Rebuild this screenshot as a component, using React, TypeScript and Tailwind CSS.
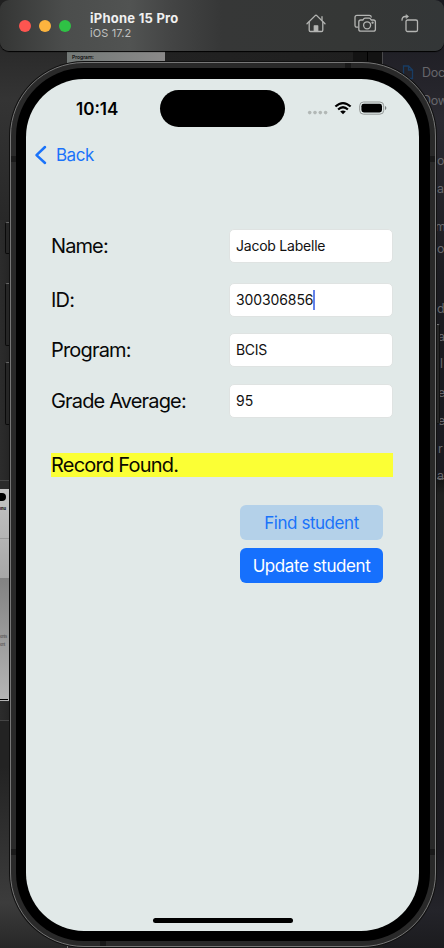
import React from "react";

const FONT = "font-['Inter','Roboto',sans-serif]";

function HomeIcon() {
  return (
    <svg width="20" height="19" viewBox="0 0 20 19" fill="none" stroke="#b4b5b3" strokeWidth="1.3" strokeLinecap="round" strokeLinejoin="round">
      <path d="M1 9.7 9.2 1.6q.8-.7 1.6 0L19 9.7" />
      <path d="M3.2 8v8.2q0 1.3 1.3 1.3h11q1.3 0 1.3-1.3V8M16 6.2V2.7" />
      <path d="M8.3 17v-5.2h3.4V17z" fill="#b4b5b3" />
    </svg>
  );
}

function CameraIcon() {
  return (
    <svg width="23" height="19" viewBox="0 0 23 19" fill="none" stroke="#b4b5b3" strokeWidth="1.3" strokeLinecap="round" strokeLinejoin="round">
      <path d="M3.8 13.2H3Q1 13.2 1 11.2V3.4Q1 1.4 3 1.4h12.3q1.9 0 1.9 1.6" />
      <path d="M6.8 6h2.1l1-1.3q.5-.6 1.2-.6h4q.7 0 1.2.6l1 1.3h2.1q2 0 2 2v7.2q0 2-2 2H6.8q-2 0-2-2V8q0-2 2-2Z" />
      <circle cx="13.1" cy="11.3" r="3.5" />
      <circle cx="18.6" cy="8.7" r=".5" fill="#b4b5b3" />
    </svg>
  );
}

function RotateIcon() {
  return (
    <svg width="18" height="19" viewBox="0 0 18 19" fill="none" stroke="#b4b5b3" strokeWidth="1.3" strokeLinecap="round" strokeLinejoin="round">
      <rect x="5" y="6" width="11.5" height="11.5" rx="1.6" />
      <path d="M1 6.2Q1 2.5 4.3 2.5h2" />
      <path d="M5.3.8 7.6 2.5 5.3 4.3Z" fill="#b4b5b3" strokeWidth=".6" />
    </svg>
  );
}

function StatusIcons() {
  return (
    <svg width="80" height="16" viewBox="0 0 80 16">
      <g fill="#b2b8b6">
        <circle cx="2.7" cy="12.6" r="1.8" />
        <circle cx="8" cy="12.6" r="1.8" />
        <circle cx="13.3" cy="12.6" r="1.8" />
        <circle cx="18.6" cy="12.6" r="1.8" />
      </g>
      <g fill="none" stroke="#000" strokeWidth="2.2">
        <path d="M28.4 6.5q7.6-6.9 15.2 0" />
        <path d="M31.1 9.5q4.9-4.5 9.8 0" />
      </g>
      <path d="M33.2 11.6q2.8-2.2 5.6 0l-2.8 2.7Z" />
      <rect x="52.7" y="2" width="24" height="12.2" rx="3.8" fill="none" stroke="#929796" strokeWidth="1" />
      <rect x="54.4" y="3.8" width="20.6" height="8.6" rx="2.4" />
      <path d="M78 6q1.4.5 1.4 2t-1.4 2Z" fill="#7b807f" />
    </svg>
  );
}

const SIDEBAR = [
  { text: "Doc", pos: "left-[422px] top-[64px]" },
  { text: "Dow", pos: "left-[422px] top-[92px]" },
  { text: "o", pos: "left-[437px] top-[152px]" },
  { text: "a", pos: "left-[437px] top-[180px]" },
  { text: "m", pos: "left-[435px] top-[218px]" },
  { text: "o", pos: "left-[437px] top-[240px]" },
  { text: "d", pos: "left-[437px] top-[300px]" },
  { text: "a", pos: "left-[438px] top-[328px]" },
  { text: "l", pos: "left-[440px] top-[355px]" },
  { text: "e", pos: "left-[438px] top-[384px]" },
  { text: "e", pos: "left-[438px] top-[412px]" },
  { text: "r", pos: "left-[438px] top-[440px]" },
  { text: "a", pos: "left-[437px] top-[467px]" },
];

function Desktop() {
  return (
    <div className="absolute inset-0 overflow-hidden bg-[linear-gradient(90deg,#2c2c2c_0,#242424_12px,#1e1e1e_440px)]">
      <div className="absolute left-0 top-0 h-[220px] w-[67px] bg-[linear-gradient(#202020,#343434_45%,#282828)]" />
      <div className="absolute left-[67px] top-0 h-[100px] w-[98px] bg-[linear-gradient(90deg,#737977,#8a8989)]">
        <span className="absolute left-[5px] top-[53px] text-[5px] leading-[8px] font-medium text-black">Program:</span>
      </div>
      <div className="absolute left-[353px] top-0 h-[90px] w-[30px] border-r border-[#4a4a4c] bg-[#131313]" />
      <div className="absolute left-[367px] top-0 h-[90px] w-px bg-black" />
      <div className="absolute left-[383px] top-0 h-[479px] w-[61px] border-b border-[#5b5b5e] bg-[linear-gradient(#19191f,#2a2930_25%,#1b1b20_60%,#1a1a20)]">
        <svg className="absolute left-[19px] top-[65px]" width="12" height="15" viewBox="0 0 12 15" fill="none" stroke="#183c63" strokeWidth="1.3">
          <path d="M1.5 1h5l4 4v8.5h-9zM6.5 1v4h4" />
        </svg>
      </div>
      {SIDEBAR.map((s) => (
        <span key={s.pos} className={`absolute ${s.pos} text-[12.5px] leading-[17px] tracking-[-0.3px] text-[#66666b]`}>{s.text}</span>
      ))}
      <div className="absolute left-[383px] top-[480px] h-[468px] w-[61px] bg-[linear-gradient(#151515,#202020_15px,#1b1a1f_370px,#24242a_430px,#1b1b1e)]" />
      <div className="absolute left-0 top-[480px] h-[222px] w-[10px] border-t border-[#474747] bg-[#2b2b2b]">
        <div className="absolute left-0 top-[8px] h-[89px] w-[9px] bg-[linear-gradient(#c4c4c4,#a7a7a7)]" />
        <div className="absolute -left-[3px] top-[12px] h-[8px] w-[9px] rounded-full bg-black" />
        <span className="absolute left-0 top-[25px] text-[4px] leading-[6px] font-bold text-black">lnu</span>
        <div className="absolute left-0 top-[57px] h-px w-[9px] bg-[#999]" />
        <div className="absolute left-0 top-[97px] h-[123px] w-[9px] bg-[linear-gradient(#828282,#a9a9a9_75%,#b5b5b5)]" />
        <span className="absolute left-0 top-[153px] text-[4px] leading-[6px] tracking-[-0.3px] text-[#444]">ents</span>
        <span className="absolute left-0 top-[161px] text-[4px] leading-[6px] tracking-[-0.3px] text-[#444]">ent</span>
        <div className="absolute left-0 top-[218px] h-px w-[8px] bg-black" />
      </div>
      <div className="absolute left-0 top-[720px] h-px w-[11px] bg-[#454545]" />
      <div className="absolute left-0 top-[721px] h-[227px] w-[67px] bg-[linear-gradient(#232323_20%,#3c3c3c_80%,#272727)]" />
      <div className="absolute left-[67px] top-[945px] h-[3px] w-[98px] border-l border-t border-[#777] bg-[#2a272a]" />
    </div>
  );
}

function TitleBar() {
  return (
    <header className="relative z-10 flex h-[51px] w-[444px] items-center rounded-[9px] bg-[linear-gradient(90deg,#353635_0,#4b4d4c_65px,#515352_130px,#444545_170px,#363737_222px,#353736_350px,#333637)] pl-[19px] pr-[25px] shadow-[0_1px_1px_#000]">
      <div className="flex gap-2">
        <i className="size-3 rounded-full bg-[#fe5550]" />
        <i className="size-3 rounded-full bg-[#fdb43e]" />
        <i className="size-3 rounded-full bg-[#2fc245]" />
      </div>
      <div className="ml-[19px] flex grow flex-col">
        <span className="text-[13px] leading-[15px] font-bold tracking-[0.25px] text-[#f0f0f0]">iPhone 15 Pro</span>
        <span className="text-[11px] leading-[14px] tracking-[0.1px] text-[#c0c1c0]">iOS 17.2</span>
      </div>
      <div className="flex -translate-y-[2px] items-center">
        <HomeIcon />
        <span className="w-[28px]" />
        <CameraIcon />
        <span className="w-[24px]" />
        <RotateIcon />
      </div>
    </header>
  );
}

function Row({ label, value, gap, caret, labelTrack, valueTrack }: { label: string; value: string; gap: string; caret?: boolean; labelTrack: string; valueTrack: string }) {
  return (
    <div className={`flex h-[34px] items-center ${gap}`}>
      <label className={`w-[178px] whitespace-nowrap text-[20px] leading-6 text-[#080808] ${labelTrack}`}>{label}</label>
      <div className="flex h-[34px] w-[164px] items-center rounded-[5px] border border-[#dfe3e2] bg-white pl-[6px]">
        <span className={`text-[14px] leading-5 text-[#111] ${valueTrack}`}>{value}</span>
        {caret && <span className="h-5 w-[2px] bg-[#6482ea]" />}
      </div>
    </div>
  );
}

function Phone() {
  return (
    <div className="absolute left-[10px] top-[62px] z-[5] h-[885px] w-[426px]">
      <div className="absolute -left-[5px] top-[160px] h-[32px] w-[8px] rounded-l-[2px] border border-[#0a0a0a] border-t-[#666] bg-[#262626]" />
      <div className="absolute -left-[5px] top-[221px] h-[63px] w-[8px] rounded-l-[2px] border border-[#0a0a0a] border-t-[#666] bg-[#262626]" />
      <div className="absolute -left-[5px] top-[300px] h-[63px] w-[8px] rounded-l-[2px] border border-[#0a0a0a] border-t-[#666] bg-[#262626]" />
      <div className="absolute -right-[4px] top-[262px] h-[100px] w-[8px] rounded-r-[2px] border border-[#111] border-t-[#777] bg-[#262626]" />
      <div className="absolute inset-0 rounded-[74px] border border-[#777] bg-[#292929] shadow-[0_0_0_1px_#111] p-[5px]">
        <div className="absolute left-0 top-[93px] h-[6px] w-[5px] bg-[#191919]" />
        <div className="absolute right-0 top-[93px] h-[6px] w-[5px] bg-[#191919]" />
        <div className="absolute bottom-[91px] left-0 h-[6px] w-[5px] bg-[#191919]" />
        <div className="absolute bottom-[91px] right-0 h-[6px] w-[5px] bg-[#191919]" />
        <div className="absolute right-[84px] top-0 h-[6px] w-[6px] bg-[#191919]" />
        <div className="absolute bottom-0 left-[89px] h-[6px] w-[6px] bg-[#191919]" />
        <div className="relative h-full rounded-[68px] bg-black px-[10px] pt-[11px]">
          <main className="relative flex h-[852px] w-[393px] flex-col overflow-hidden rounded-[58px] bg-[#e1e9e8]">
            <div className="flex h-[59px] items-center pl-[50px] pr-[31px]">
              <span className="w-[84px] text-[17px] leading-5 font-semibold tracking-[0px] text-black">10:14</span>
              <div className="h-[37px] w-[125px] rounded-full bg-black" />
              <div className="ml-[22px] -mt-px"><StatusIcons /></div>
            </div>
            <nav className="flex h-[34px] items-center pl-[8px] text-[#1a73fa]">
              <svg width="13" height="20" viewBox="0 0 13 20" fill="none" stroke="currentColor" strokeWidth="2.5" strokeLinecap="round" strokeLinejoin="round">
                <path d="m11 2-8.5 8.1L11 18" />
              </svg>
              <span className="ml-[9px] text-[17px] leading-5 tracking-[-0.5px]">Back</span>
            </nav>
            <section className="flex flex-col pl-[25px] pt-[57px]">
              <Row label="Name:" value="Jacob Labelle" gap="" labelTrack="tracking-[-0.9px]" valueTrack="tracking-[-0.23px]" />
              <Row label="ID:" value="300306856" gap="mt-[20px]" caret labelTrack="tracking-[-0.8px]" valueTrack="tracking-[-0.1px]" />
              <Row label="Program:" value="BCIS" gap="mt-[16px]" labelTrack="tracking-[-0.82px]" valueTrack="tracking-[-0.3px]" />
              <Row label="Grade Average:" value="95" gap="mt-[17px]" labelTrack="tracking-[-0.84px]" valueTrack="tracking-[0.1px]" />
              <p className="mt-[35px] h-6 w-[342px] bg-[#fbff35] text-[20px] leading-6 tracking-[-0.78px] text-[#0a0a00]">Record Found.</p>
              <div className="ml-[189px] mt-7 flex w-[143px] flex-col gap-2 text-[17px] leading-5">
                <button className="h-[35px] rounded-[6px] bg-[#b4d1e9] tracking-[-0.45px] text-[#1a73fa]">Find student</button>
                <button className="h-[35px] rounded-[6px] bg-[#1670fd] tracking-[-0.42px] text-white">Update student</button>
              </div>
            </section>
            <div className="mx-auto mb-[8px] mt-auto h-[5px] w-[140px] rounded-full bg-black" />
          </main>
        </div>
      </div>
    </div>
  );
}

export default function App() {
  return (
    <div className={`relative h-[948px] w-[444px] overflow-hidden bg-black antialiased ${FONT}`}>
      <Desktop />
      <Phone />
      <TitleBar />
    </div>
  );
}
